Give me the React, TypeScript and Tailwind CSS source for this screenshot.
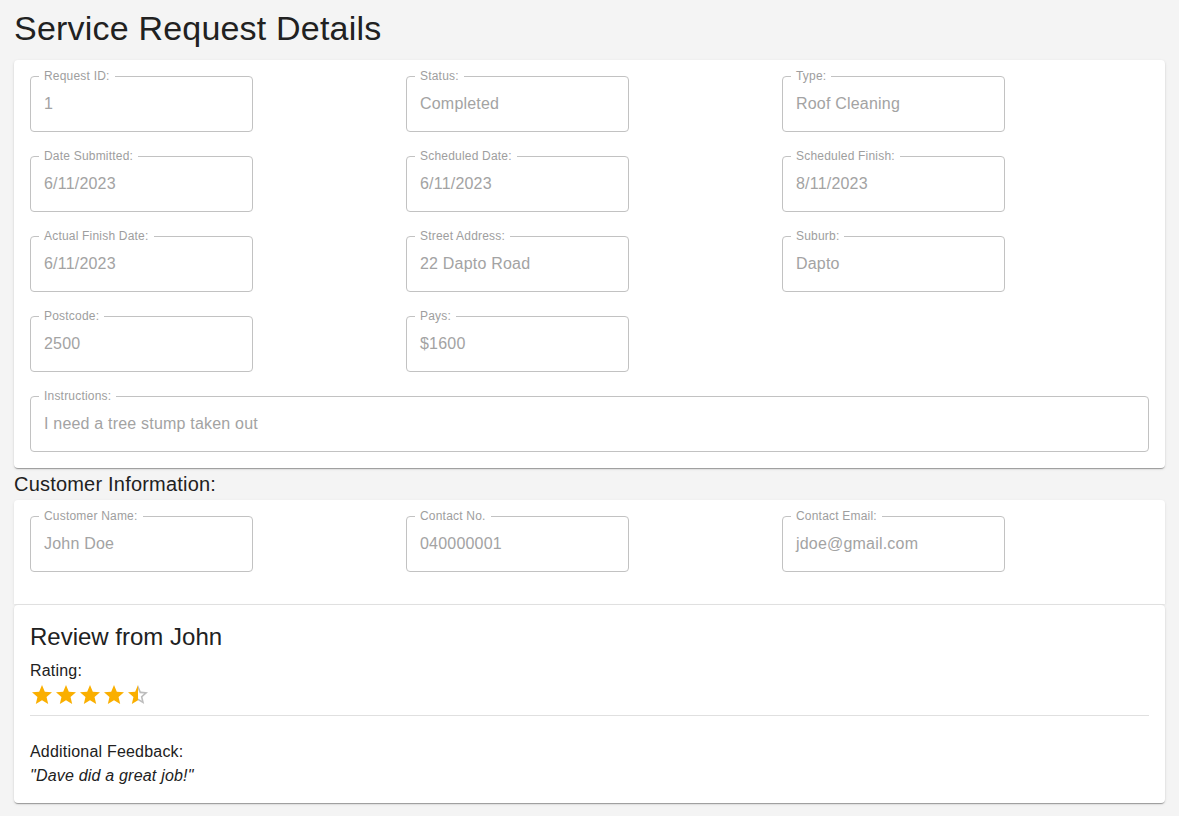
import React from "react";

function Field({ label, value, wide }: { label: string; value: string; wide?: boolean }) {
  return (
    <div className={`relative h-[56px] rounded-[4px] border border-[#c2c2c2] ${wide ? "w-full" : "w-[223px]"}`}>
      <span className="absolute left-[8px] top-[-9px] bg-white px-[5px] text-[12px] leading-[16px] text-[#9e9e9e]">
        {label}
      </span>
      <div className="flex h-full items-center pl-[13px] text-[16px] text-[#a3a3a3]">{value}</div>
    </div>
  );
}

function Star({ fill }: { fill: "full" | "half" }) {
  const d =
    "M12 17.27L18.18 21l-1.64-7.03L22 9.24l-7.19-.61L12 2 9.19 8.63 2 9.24l5.46 4.73L5.82 21z";
  const outline =
    "M22 9.24l-7.19-.62L12 2 9.19 8.63 2 9.24l5.46 4.73L5.82 21 12 17.27 18.18 21l-1.63-7.03L22 9.24zM12 15.4l-3.76 2.27 1-4.28-3.32-2.88 4.38-.38L12 6.1l1.71 4.04 4.38.38-3.32 2.88 1 4.28L12 15.4z";
  if (fill === "full") {
    return (
      <svg width="24" height="24" viewBox="0 0 24 24">
        <path d={d} fill="#faaf00" />
      </svg>
    );
  }
  return (
    <svg width="24" height="24" viewBox="0 0 24 24">
      <defs>
        <clipPath id="lefthalf">
          <rect x="0" y="0" width="12" height="24" />
        </clipPath>
        <clipPath id="righthalf">
          <rect x="12" y="0" width="12" height="24" />
        </clipPath>
      </defs>
      <path d={outline} fill="#bdbdbd" clipPath="url(#righthalf)" />
      <path d={d} fill="#faaf00" clipPath="url(#lefthalf)" />
    </svg>
  );
}

export default function App() {
  const card = "rounded-[4px] bg-white shadow-[0_2px_1px_-1px_rgba(0,0,0,0.2),0_1px_1px_0_rgba(0,0,0,0.14),0_1px_3px_0_rgba(0,0,0,0.12)]";
  return (
    <div className="min-h-[816px] bg-[#f4f4f4] px-[14px] pb-[12px] tracking-[0.2px] text-[#212121]" style={{ fontFamily: "'Liberation Sans', Arial, sans-serif" }}>
      <h1 className="pt-[4px] pb-[8px] text-[34px] leading-[48px] font-normal">Service Request Details</h1>
      <div className={`${card} px-[16px] pt-[16px] pb-[16px]`}>
        <div className="grid grid-cols-[376px_376px_376px] gap-y-[24px]">
          <Field label="Request ID:" value="1" />
          <Field label="Status:" value="Completed" />
          <Field label="Type:" value="Roof Cleaning" />
          <Field label="Date Submitted:" value="6/11/2023" />
          <Field label="Scheduled Date:" value="6/11/2023" />
          <Field label="Scheduled Finish:" value="8/11/2023" />
          <Field label="Actual Finish Date:" value="6/11/2023" />
          <Field label="Street Address:" value="22 Dapto Road" />
          <Field label="Suburb:" value="Dapto" />
          <Field label="Postcode:" value="2500" />
          <Field label="Pays:" value="$1600" />
        </div>
        <div className="mt-[24px]">
          <Field label="Instructions:" value="I need a tree stump taken out" wide />
        </div>
      </div>
      <div className="h-[32px] text-[20px] leading-[32px]">Customer Information:</div>
      <div className="rounded-t-[4px] bg-white shadow-[0_1px_3px_0_rgba(0,0,0,0.10)] px-[16px] pt-[16px] pb-[32px]">
        <div className="grid grid-cols-[376px_376px_376px]">
          <Field label="Customer Name:" value="John Doe" />
          <Field label="Contact No." value="040000001" />
          <Field label="Contact Email:" value="jdoe@gmail.com" />
        </div>
      </div>
      <div className={`${card} mt-[1px] px-[16px] pt-[16px] pb-[15px]`}>
        <div className="text-[24px] leading-[32px] tracking-normal">Review from John</div>
        <div className="mt-[6px] text-[16px] leading-[24px]">Rating:</div>
        <div className="flex">
          <Star fill="full" />
          <Star fill="full" />
          <Star fill="full" />
          <Star fill="full" />
          <Star fill="half" />
        </div>
        <div className="mt-[8px] h-px bg-[#e0e0e0]" />
        <div className="mt-[24px] text-[16px] leading-[24px]">Additional Feedback:</div>
        <div className="text-[16px] leading-[24px] italic">"Dave did a great job!"</div>
      </div>
    </div>
  );
}
